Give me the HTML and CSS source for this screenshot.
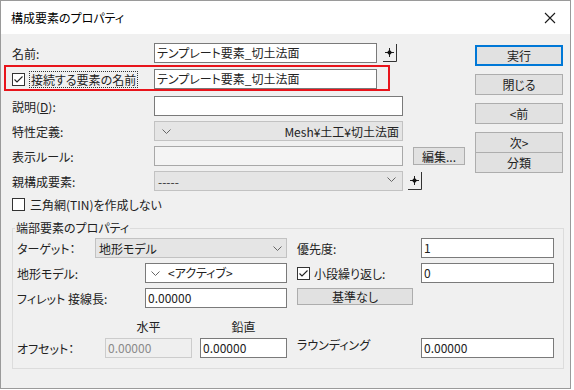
FILE: index.html
```html
<!DOCTYPE html>
<html lang="ja">
<head>
    <meta charset="UTF-8">
    <title>構成要素のプロパティ</title>
    <link rel="stylesheet" href="styles.css">
</head>
<body>
    <div class="window">
        <div class="titlebar">
            <span class="title">構成要素のプロパティ</span>
            <svg class="close" width="12" height="12" viewBox="0 0 12 12"><path d="M1 1L11 11M11 1L1 11" stroke="#1a1a1a" stroke-width="1.1"/></svg>
        </div>

        <div class="content">
            <div class="upper">
                <!-- Main fields -->
                <div class="form">
                    <div class="row">
                        <span class="label">名前:</span>
                        <div class="field name-field">テンプレート要素_切土法面</div>
                        <span class="pin pin-name">
                            <svg width="16" height="20" viewBox="0 0 16 20"><path d="M14.5 1V18.5H1" fill="none" stroke="#333"/><path d="M7.5 5V14M3 9.5H12" stroke="#222"/><path d="M7.5 6.8L10.2 9.5L7.5 12.2L4.8 9.5Z" fill="#111"/></svg>
                        </span>
                    </div>
                    <div class="row row-marked">
                        <span class="label">
                            <span class="checkbox"><svg width="11" height="11" viewBox="0 0 11 11"><path d="M1.5 5.5L4 8L9.5 2.5" fill="none" stroke="#222" stroke-width="1.1"/></svg></span><span class="focus">接続する要素の名前</span>
                        </span>
                        <div class="field name-field">テンプレート要素_切土法面</div>
                        <div class="marker"></div>
                    </div>
                    <div class="row">
                        <span class="label">説明(<u>D</u>):</span>
                        <div class="field wide"></div>
                    </div>
                    <div class="row">
                        <span class="label">特性定義:</span>
                        <div class="combo wide">
                            <svg class="chev" width="9" height="5" viewBox="0 0 9 5"><path d="M0.5 0.5L4.5 4.5L8.5 0.5" fill="none" stroke="#666"/></svg>
                            <span>Mesh¥土工¥切土法面</span>
                        </div>
                    </div>
                    <div class="row">
                        <span class="label">表示ルール:</span>
                        <div class="field wide readonly"></div>
                        <button class="btn edit">編集...</button>
                    </div>
                    <div class="row">
                        <span class="label">親構成要素:</span>
                        <div class="combo wide parent">
                            <span class="dashes">-----</span>
                            <svg class="chev" width="9" height="5" viewBox="0 0 9 5"><path d="M0.5 0.5L4.5 4.5L8.5 0.5" fill="none" stroke="#666"/></svg>
                        </div>
                        <span class="pin pin-parent">
                            <svg width="16" height="20" viewBox="0 0 16 20"><path d="M14.5 1V18.5H1" fill="none" stroke="#333"/><path d="M7.5 5V14M3 9.5H12" stroke="#222"/><path d="M7.5 6.8L10.2 9.5L7.5 12.2L4.8 9.5Z" fill="#111"/></svg>
                        </span>
                    </div>
                    <div class="row tin">
                        <span class="checkbox"></span>
                        <span>三角網(TIN)を作成しない</span>
                    </div>
                </div>

                <!-- Dialog buttons -->
                <div class="actions">
                    <button class="btn default">実行</button>
                    <button class="btn">閉じる</button>
                    <button class="btn">&lt;前</button>
                    <button class="btn">次&gt;</button>
                    <button class="btn joined">分類</button>
                </div>
            </div>

            <!-- End element properties -->
            <div class="group">
                <span class="legend">端部要素のプロパティ</span>

                <div class="grow">
                    <div class="gleft">
                        <span>ターゲット：</span>
                        <div class="combo target">
                            <span>地形モデル</span>
                            <svg class="chev" width="9" height="5" viewBox="0 0 9 5"><path d="M0.5 0.5L4.5 4.5L8.5 0.5" fill="none" stroke="#666"/></svg>
                        </div>
                    </div>
                    <div class="gright">
                        <span>優先度:</span>
                        <div class="field short">1</div>
                    </div>
                </div>

                <div class="grow">
                    <div class="gleft">
                        <span>地形モデル:</span>
                        <div class="field medium model">
                            <svg class="chev" width="9" height="5" viewBox="0 0 9 5"><path d="M0.5 0.5L4.5 4.5L8.5 0.5" fill="none" stroke="#666"/></svg>
                            <span>&lt;アクティブ&gt;</span>
                        </div>
                    </div>
                    <div class="gright">
                        <span class="check-text">
                            <span class="checkbox"><svg width="11" height="11" viewBox="0 0 11 11"><path d="M1.5 5.5L4 8L9.5 2.5" fill="none" stroke="#222" stroke-width="1.1"/></svg></span>小段繰り返し:
                        </span>
                        <div class="field short">0</div>
                    </div>
                </div>

                <div class="grow">
                    <div class="gleft">
                        <span>フィレット 接線長:</span>
                        <div class="field medium">0.00000</div>
                    </div>
                    <div class="gright">
                        <button class="btn base">基準なし</button>
                    </div>
                </div>

                <div class="grow heads">
                    <div class="gleft pair">
                        <span class="head">水平</span>
                        <span class="head">鉛直</span>
                    </div>
                </div>

                <div class="grow">
                    <div class="gleft">
                        <span>オフセット：</span>
                        <div class="pair">
                            <div class="field small disabled">0.00000</div>
                            <div class="field small">0.00000</div>
                        </div>
                    </div>
                    <div class="gright">
                        <span class="rounding">ラウンディング</span>
                        <div class="field short">0.00000</div>
                    </div>
                </div>
            </div>
        </div>
    </div>
</body>
</html>
```

FILE: styles.css
```css
* {
    box-sizing: border-box;
}

body {
    margin: 0;
    background-color: #ffffff;
    font-family: "Noto Sans CJK JP", "Noto Sans", sans-serif;
    font-size: 12px;
    font-feature-settings: "palt";
    color: #222;
}

/* Window frame */
.window {
    width: 571px;
    height: 389px;
    border: 1px solid #9a9a9a;
    background-color: #f0f0f0;
    display: flex;
    flex-direction: column;
}

.titlebar {
    height: 33px;
    flex: none;
    background-color: #ffffff;
    display: flex;
    align-items: center;
    justify-content: space-between;
    padding: 0 14px 0 10px;
}

.title {
    font-size: 12px;
    color: #000;
}

.content {
    flex: 1;
    padding: 0 7px 0 11px;
}

.upper {
    display: flex;
    align-items: flex-start;
}

/* Main form */
.form {
    flex: 1;
    padding-top: 9px;
}

.row {
    position: relative;
    display: flex;
    align-items: center;
    height: 20px;
    margin-top: 5px;
}

.row:first-child {
    margin-top: 0;
}

.row-marked {
    margin-top: 6px;
}

.row-marked + .row {
    margin-top: 7px;
}

.label {
    width: 142px;
    flex: none;
    display: flex;
    align-items: center;
    white-space: nowrap;
}

.field {
    height: 20px;
    flex: none;
    border: 1px solid #7a7a7a;
    background-color: #ffffff;
    padding: 0 2px;
    line-height: 18px;
    white-space: nowrap;
    overflow: hidden;
}

.name-field {
    width: 223px;
}

.wide {
    width: 249px;
}

.readonly {
    background-color: #f4f4f4;
    border-color: #a8a8a8;
}

.combo {
    height: 20px;
    flex: none;
    border: 1px solid #c2c2c2;
    background-color: #e5e5e5;
    display: flex;
    align-items: center;
    justify-content: space-between;
    padding: 0 3px 0 7px;
    white-space: nowrap;
}

.combo.parent {
    align-items: flex-end;
    padding: 0 6px 3px 3px;
}

.combo.parent .chev {
    margin-bottom: 5px;
}

.dashes {
    line-height: 10px;
    color: #333;
}

.chev {
    flex: none;
}

.pin {
    display: flex;
    width: 16px;
    height: 20px;
}

.pin-name {
    margin-left: 5px;
}

.pin-parent {
    margin-left: 4px;
}

/* Checkboxes */
.checkbox {
    width: 13px;
    height: 13px;
    flex: none;
    border: 1px solid #333;
    background-color: #ffffff;
    display: inline-flex;
    align-items: center;
    justify-content: center;
    margin-right: 4px;
}

.focus {
    border: 1px dotted #333;
    padding: 0 1px;
    line-height: 15px;
}

.tin {
    height: 14px;
    margin-top: 6px;
}

.tin .checkbox {
    margin-right: 5px;
}

/* Red annotation box */
.marker {
    position: absolute;
    left: -8px;
    top: -4px;
    width: 386px;
    height: 26px;
    border: 2px solid #e8141b;
    pointer-events: none;
}

/* Buttons */
.btn {
    font: inherit;
    font-feature-settings: "palt";
    color: #222;
    background-color: #e1e1e1;
    border: 1px solid #adadad;
    height: 21px;
    padding: 0;
    line-height: 18px;
}

.edit {
    width: 52px;
    height: 18px;
    margin-left: 10px;
    line-height: 15px;
}

.actions {
    width: 88px;
    flex: none;
    padding-top: 11px;
    display: flex;
    flex-direction: column;
    gap: 8px;
}

.actions .default {
    border-color: #0078d7;
    box-shadow: inset 0 0 0 1px #0078d7;
}

.actions .joined {
    margin-top: -9px;
}

/* Group box */
.group {
    position: relative;
    margin-top: 17px;
    width: 552px;
    border: 1px solid #dcdcdc;
    padding: 9px 9px 10px 4px;
}

.legend {
    position: absolute;
    top: -9px;
    left: 2px;
    padding: 0 1px;
    line-height: 16px;
    background-color: #f0f0f0;
}

.grow {
    display: flex;
    gap: 10px;
    height: 20px;
    margin-top: 5px;
}

.grow:first-of-type {
    margin-top: 0;
}

.grow.heads {
    height: 16px;
    margin-top: 11px;
}

.grow.heads + .grow {
    margin-top: 3px;
}

.gleft {
    width: 270px;
    display: flex;
    align-items: center;
    justify-content: space-between;
    white-space: nowrap;
}

.gright {
    width: 257px;
    display: flex;
    align-items: center;
    justify-content: space-between;
    white-space: nowrap;
}

.combo.target {
    width: 192px;
    padding: 0 4px 0 3px;
}

.short {
    width: 133px;
}

.medium {
    width: 142px;
}

.small {
    width: 87px;
}

.model {
    display: flex;
    align-items: center;
    gap: 8px;
    padding-left: 5px;
}

.check-text {
    display: flex;
    align-items: center;
}

.check-text .checkbox {
    margin-right: 4px;
}

.base {
    width: 116px;
    height: 17px;
    line-height: 14px;
    align-self: flex-start;
}

.pair {
    display: flex;
    gap: 8px;
}

.gleft.pair {
    justify-content: flex-end;
}

.head {
    width: 87px;
    text-align: center;
    line-height: 16px;
}

.disabled {
    background-color: #efefef;
    border-color: #cccccc;
    color: #8a8a8a;
}

.rounding {
    align-self: flex-start;
    line-height: 14px;
}
```
